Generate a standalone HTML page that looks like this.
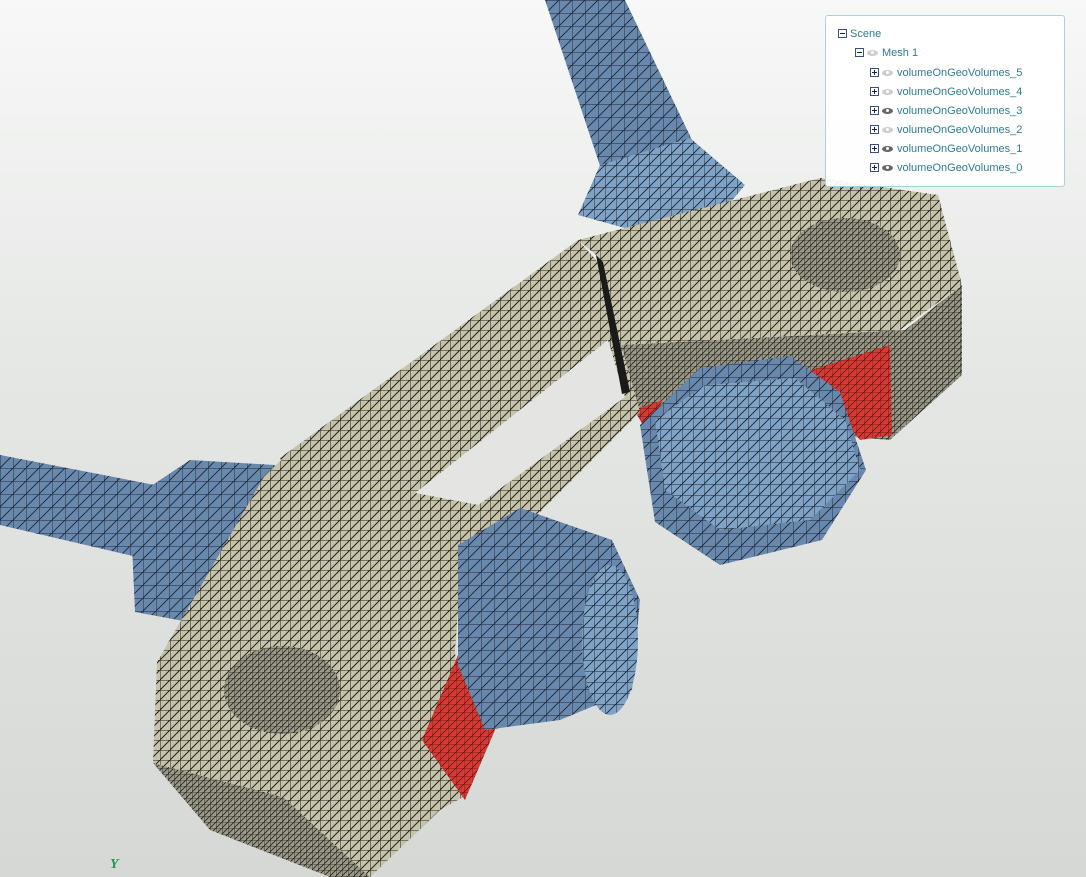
<!DOCTYPE html>
<html><head><style>
html,body{margin:0;padding:0;width:1086px;height:877px;overflow:hidden;font-family:"Liberation Sans",sans-serif}
#bg{position:absolute;left:0;top:0;width:1086px;height:877px;background:linear-gradient(#f7f8f7,#e6e8e6 40%,#d6d8d6)}
svg{position:absolute;left:0;top:0}
#panel{position:absolute;left:825px;top:15px;width:238px;height:170px;border:1px solid #a9d3da;border-radius:3px;background:rgba(255,255,255,0.93);font-size:11px;color:#2f7c8f}
.row{position:absolute;height:14px;line-height:14px;white-space:nowrap}
.bx{display:inline-block;width:7px;height:7px;border:1px solid #3a4f8a;vertical-align:-1px;position:relative;margin-right:3px;background:#fff}
.bx:before{content:"";position:absolute;left:1px;top:3px;width:5px;height:1px;background:#223}
.bx.p:after{content:"";position:absolute;left:3px;top:1px;width:1px;height:5px;background:#223}
.eye{display:inline-block;width:11px;height:6px;border-radius:50%;background:#ccc;vertical-align:0px;margin-right:4px;position:relative}
.eye.d{background:#666}
.eye:after{content:"";position:absolute;left:4px;top:1px;width:3px;height:3px;border-radius:50%;background:#fff}
</style></head><body>
<div id="bg"></div>
<svg width="1086" height="877" viewBox="0 0 1086 877">
<defs>
<pattern id="mb" width="10" height="10" patternUnits="userSpaceOnUse">
<rect width="10" height="10" fill="#c6c3aa"/><path d="M0 0H10M0 0V10M0 10L10 0" stroke="#23231c" stroke-width="1" fill="none"/></pattern>
<pattern id="md" width="6" height="6" patternUnits="userSpaceOnUse">
<rect width="6" height="6" fill="#9c9a86"/><path d="M0 0H6M0 0V6M0 6L6 0" stroke="#222" stroke-width="0.8" fill="none"/></pattern>
<pattern id="mu" width="13" height="13" patternUnits="userSpaceOnUse">
<rect width="13" height="13" fill="#6888ad"/><path d="M0 0H13M0 0V13M0 13L13 0" stroke="#1e2633" stroke-width="0.9" fill="none"/></pattern>
<pattern id="ml" width="11" height="11" patternUnits="userSpaceOnUse">
<rect width="11" height="11" fill="#7ea3c6"/><path d="M0 0H11M0 0V11M0 11L11 0" stroke="#1e2633" stroke-width="0.9" fill="none"/></pattern>
<pattern id="mr" width="8" height="8" patternUnits="userSpaceOnUse">
<rect width="8" height="8" fill="#d63a34"/><path d="M0 0H8M0 0V8M0 8L8 0" stroke="#5a1010" stroke-width="0.7" fill="none"/></pattern>
</defs>
<polygon points="545,0 625,0 692,140 608,190" fill="url(#mu)"/>
<polygon points="578,215 600,165 690,138 745,185 720,215 650,235" fill="url(#ml)"/>
<polygon points="620,345 905,330 962,285 962,375 890,440 640,420" fill="url(#md)"/>
<polygon points="578,240 820,178 938,195 962,285 900,330 620,345 596,255" fill="url(#mb)"/>
<ellipse cx="845" cy="255" rx="55" ry="37" fill="url(#md)"/>
<polygon points="805,372 890,345 892,435 860,440" fill="url(#mr)"/>
<polygon points="634,410 662,400 652,440" fill="url(#mr)"/>
<!-- bar -->
<polygon points="280,458 578,240 598,262 640,412 540,512 300,500" fill="url(#mb)"/>
<polygon points="415,493 608,340 625,397 478,505" fill="#e4e5e2"/>
<polygon points="596,255 603,262 630,392 622,394" fill="#1a1a1a"/>
<!-- right nut -->
<polygon points="640,425 700,368 790,356 840,392 866,470 822,540 720,565 655,522" fill="url(#mu)"/>
<polygon points="655,420 705,385 795,378 845,420 860,470 810,520 720,530 665,490" fill="url(#ml)"/>
<!-- left rod + nut -->
<polygon points="0,455 160,486 150,560 0,525" fill="url(#mu)"/>
<polygon points="130,500 190,460 275,465 255,555 205,625 135,612" fill="url(#mu)"/>
<!-- left block -->
<polygon points="153,763 283,797 370,877 330,877 210,830" fill="url(#md)"/>
<polygon points="157,662 265,475 290,452 415,493 478,505 540,512 462,560 455,650 463,797 440,810 370,877 283,797 153,763" fill="url(#mb)"/>
<ellipse cx="282" cy="690" rx="58" ry="44" fill="url(#md)"/>
<polygon points="422,740 458,655 495,730 465,800" fill="url(#mr)"/>
<!-- left nut -->
<polygon points="458,545 520,508 612,540 640,600 632,690 560,720 485,730 458,665" fill="url(#mu)"/>
<ellipse cx="610" cy="640" rx="28" ry="75" fill="url(#ml)"/>
<text x="110" y="868" fill="#1a9a50" font-family="Liberation Serif,serif" font-weight="bold" font-style="italic" font-size="14">Y</text>
</svg>
<div id="panel">
<div class="row" style="left:12px;top:11px"><span class="bx"></span>Scene</div>
<div class="row" style="left:29px;top:30px"><span class="bx"></span><span class="eye"></span>Mesh 1</div>
<div class="row" style="left:44px;top:50px"><span class="bx p"></span><span class="eye"></span>volumeOnGeoVolumes_5</div>
<div class="row" style="left:44px;top:69px"><span class="bx p"></span><span class="eye"></span>volumeOnGeoVolumes_4</div>
<div class="row" style="left:44px;top:88px"><span class="bx p"></span><span class="eye d"></span>volumeOnGeoVolumes_3</div>
<div class="row" style="left:44px;top:107px"><span class="bx p"></span><span class="eye"></span>volumeOnGeoVolumes_2</div>
<div class="row" style="left:44px;top:126px"><span class="bx p"></span><span class="eye d"></span>volumeOnGeoVolumes_1</div>
<div class="row" style="left:44px;top:145px"><span class="bx p"></span><span class="eye d"></span>volumeOnGeoVolumes_0</div>
</div>
</body></html>
